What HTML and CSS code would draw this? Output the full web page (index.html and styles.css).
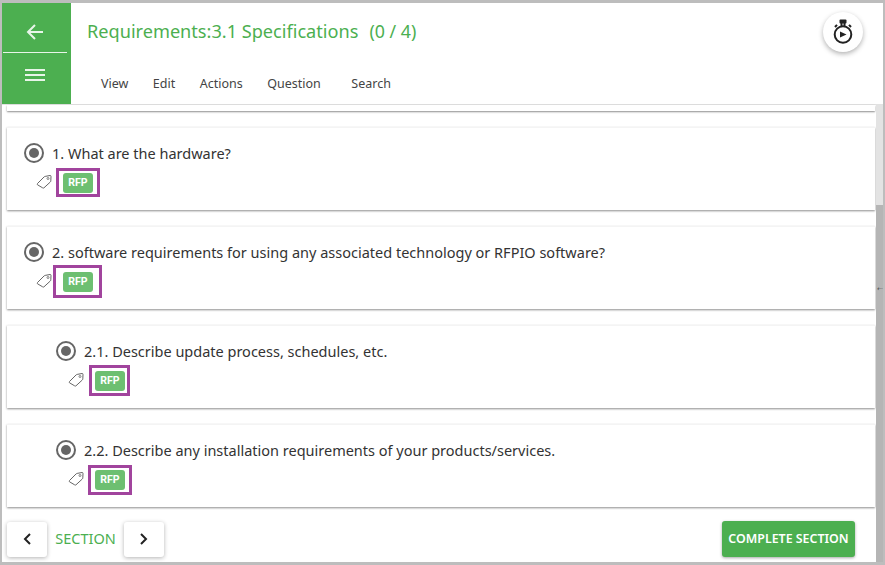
FILE: index.html
```html
<!DOCTYPE html>
<html lang="en">
<head>
	<meta charset="UTF-8">
	<title>Requirements</title>
	<link rel="stylesheet" href="styles.css">
</head>
<body>
	<div class="frame">
		<div class="top">
			<div class="side">
				<div class="side-btn side-back">
					<svg width="20" height="18" viewBox="0 0 20 18"><path d="M18 9H3M10 2L3 9l7 7" fill="none" stroke="#e8f5e9" stroke-width="2"/></svg>
				</div>
				<div class="side-btn side-menu">
					<svg width="20" height="14" viewBox="0 0 20 14"><path d="M0 2h20M0 7h20M0 12h20" fill="none" stroke="#e8f5e9" stroke-width="2"/></svg>
				</div>
			</div>
			<div class="head">
				<h1 class="title">Requirements:3.1 Specifications<span class="count">(0 / 4)</span></h1>
				<ul class="tabs">
					<li>View</li>
					<li>Edit</li>
					<li>Actions</li>
					<li>Question</li>
					<li class="tab-search">Search</li>
				</ul>
			</div>
			<div class="timer">
				<svg width="24" height="26" viewBox="0 0 24 26">
					<rect x="8.500" y="0.500" width="7" height="4" rx="1" fill="#222"/>
					<path d="M10.500 4v3M13.500 4v3M4 8l2-2.200M20 8l-2-2.200" stroke="#222" stroke-width="2" fill="none"/>
					<circle cx="12" cy="15.500" r="8.300" fill="none" stroke="#222" stroke-width="2"/>
					<path d="M9 12.500l6.500 3-6.500 3z" fill="#222"/>
				</svg>
			</div>
		</div>
		<div class="body">
			<div class="list">
				<div class="card card-cut"></div>
				<div class="card">
					<div class="q"><span class="radio"></span>1. What are the hardware?</div>
					<div class="tagrow">
						<svg class="tag" width="16" height="15" viewBox="0 0 16 15"><path d="M1.500 9.500L8 3q.5-.5 1.200-.6L14 1.500q1-.1 1 1l-.2 4.300q0 .7-.5 1.200L8 13.800q-.7.600-1.400 0L1.500 10.800q-.6-.7 0-1.300z" fill="none" stroke="#666" stroke-width="1"/><circle cx="12" cy="4.500" r="1" fill="none" stroke="#666" stroke-width=".8"/></svg>
						<span class="pill mark-a">RFP</span>
					</div>
				</div>
				<div class="card">
					<div class="q"><span class="radio"></span>2. software requirements for using any associated technology or RFPIO software?</div>
					<div class="tagrow">
						<svg class="tag" width="16" height="15" viewBox="0 0 16 15"><path d="M1.500 9.500L8 3q.5-.5 1.200-.6L14 1.500q1-.1 1 1l-.2 4.300q0 .7-.5 1.200L8 13.800q-.7.600-1.400 0L1.500 10.800q-.6-.7 0-1.300z" fill="none" stroke="#666" stroke-width="1"/><circle cx="12" cy="4.500" r="1" fill="none" stroke="#666" stroke-width=".8"/></svg>
						<span class="pill mark-b">RFP</span>
					</div>
				</div>
				<div class="card card-sub">
					<div class="q"><span class="radio"></span>2.1. Describe update process, schedules, etc.</div>
					<div class="tagrow">
						<svg class="tag" width="16" height="15" viewBox="0 0 16 15"><path d="M1.500 9.500L8 3q.5-.5 1.200-.6L14 1.500q1-.1 1 1l-.2 4.300q0 .7-.5 1.200L8 13.800q-.7.600-1.400 0L1.500 10.800q-.6-.7 0-1.300z" fill="none" stroke="#666" stroke-width="1"/><circle cx="12" cy="4.500" r="1" fill="none" stroke="#666" stroke-width=".8"/></svg>
						<span class="pill mark-c">RFP</span>
					</div>
				</div>
				<div class="card card-sub">
					<div class="q"><span class="radio"></span>2.2. Describe any installation requirements of your products/services.</div>
					<div class="tagrow">
						<svg class="tag" width="16" height="15" viewBox="0 0 16 15"><path d="M1.500 9.500L8 3q.5-.5 1.200-.6L14 1.500q1-.1 1 1l-.2 4.300q0 .7-.5 1.200L8 13.800q-.7.600-1.400 0L1.500 10.800q-.6-.7 0-1.300z" fill="none" stroke="#666" stroke-width="1"/><circle cx="12" cy="4.500" r="1" fill="none" stroke="#666" stroke-width=".8"/></svg>
						<span class="pill mark-d">RFP</span>
					</div>
				</div>
				<div class="foot">
					<div class="arrow">
						<svg width="8" height="12" viewBox="0 0 8 12"><path d="M7 1L2 6l5 5" fill="none" stroke="#222" stroke-width="2"/></svg>
					</div>
					<span class="section">SECTION</span>
					<div class="arrow">
						<svg width="8" height="12" viewBox="0 0 8 12"><path d="M1 1l5 5-5 5" fill="none" stroke="#222" stroke-width="2"/></svg>
					</div>
					<div class="complete">COMPLETE SECTION</div>
				</div>
			</div>
			<div class="scroll"><div class="thumb"></div></div>
			<span class="grip">⇠</span>
		</div>
	</div>
</body>
</html>
```

FILE: styles.css
```css
body,ul,li,h1{padding: 0;margin: 0;}
body{background-color: #fff;font-family: "Noto Sans","Open Sans",sans-serif;color: #333;}
.frame{width: 885px;height: 565px;box-sizing: border-box;border-style: solid;border-color: #bdbdbd;border-width: 3px 2px 3px 2px;display: flex;flex-direction: column;overflow: hidden;}

.top{height: 102px;flex: none;display: flex;border-bottom: 1px solid #e2e2e2;box-sizing: border-box;}
.side{width: 69px;flex: none;background-color: #4caf50;display: flex;flex-direction: column;}
.side-btn{display: flex;align-items: center;justify-content: center;}
.side-back{height: 41px;padding-top: 8px;margin: 0 4px 0 1px;border-bottom: 1px solid #e8f5e9;}
.side-menu{flex: 1;padding: 0 4px 7px 0;}
.head{flex: 1;padding-left: 16px;}
.title{font-size: 18.150px;font-weight: 400;color: #4caf50;line-height: 24px;margin-top: 16px;}
.count{margin-left: 11px;font-size: 17.800px;}
.tabs{list-style-type: none;display: flex;margin: 32px 0 0 14px;font-size: 12.500px;line-height: 18px;color: #444;}
.tabs li{margin-right: 24.500px;}
.tabs .tab-search{margin-left: 6px;}
.timer{width: 40px;height: 40px;border-radius: 50%;flex: none;margin: 9px 20px 0 0;background-color: #fff;box-shadow: 0 2px 5px rgba(0,0,0,.3);display: flex;align-items: center;justify-content: center;}

.body{flex: 1;display: flex;position: relative;min-height: 0;}
.list{flex: 1;min-width: 0;padding: 0 0 0 5px;display: flex;flex-direction: column;}
.scroll{width: 7px;flex: none;background-color: #e3e3e3;margin-left: 1px;}
.thumb{margin-top: 100px;height: 400px;background-color: #b5b5b5;}
.grip{position: absolute;right: 0;top: 179px;font-size: 7px;line-height: 10px;color: #555;}

.card{height: 83px;box-sizing: border-box;margin: 0 0 16px;padding: 15px 0 0 17px;background-color: #fff;border-top: 1px solid #f4f4f4;box-shadow: 0 1px 2px rgba(0,0,0,.45);}
.card-cut{height: 6px;padding: 0;border-top: 0;}
.card-sub{padding-left: 49px;}
.q{display: flex;align-items: center;font-size: 14.500px;line-height: 20px;color: #333;}
.radio{width: 20px;height: 20px;box-sizing: border-box;border: 2px solid #666;border-radius: 50%;margin-right: 8px;flex: none;position: relative;}
.radio:after{content: "";position: absolute;left: 3px;top: 3px;width: 10px;height: 10px;border-radius: 50%;background-color: #666;}
.tagrow{display: flex;align-items: center;margin: 0 0 0 12px;padding-top: 10px;}
.tag{margin-right: 11px;margin-top: -4px;}
.pill{display: block;width: 30px;height: 20px;border-radius: 3px;background-color: #6dbf71;color: #fff;font-family: Roboto,sans-serif;font-size: 10.500px;font-weight: 700;line-height: 20px;text-align: center;position: relative;}
.pill:after{content: "";position: absolute;border: 3px solid #a1449d;}
.mark-a:after{left: -7px;right: -7px;top: -5px;bottom: -4px;}
.mark-b:after{left: -10px;right: -9px;top: -7px;bottom: -6px;}
.mark-c:after{left: -6px;right: -5px;top: -6px;bottom: -5px;}
.mark-d:after{left: -7px;right: -7px;top: -5px;bottom: -5px;}

.foot{display: flex;align-items: center;margin-top: -2px;}
.arrow{width: 40px;height: 35px;border-radius: 3px;background-color: #fff;box-shadow: 0 1px 4px rgba(0,0,0,.3);display: flex;align-items: center;justify-content: center;}
.section{width: 77px;text-align: center;font-size: 14.500px;color: #4caf50;padding-bottom: 3px;}
.complete{margin-left: auto;margin-right: 20px;width: 133px;height: 36px;border-radius: 3px;background-color: #4caf50;color: #fff;font-size: 12.400px;font-weight: 600;line-height: 35px;text-align: center;box-shadow: 0 1px 3px rgba(0,0,0,.35);}
```
